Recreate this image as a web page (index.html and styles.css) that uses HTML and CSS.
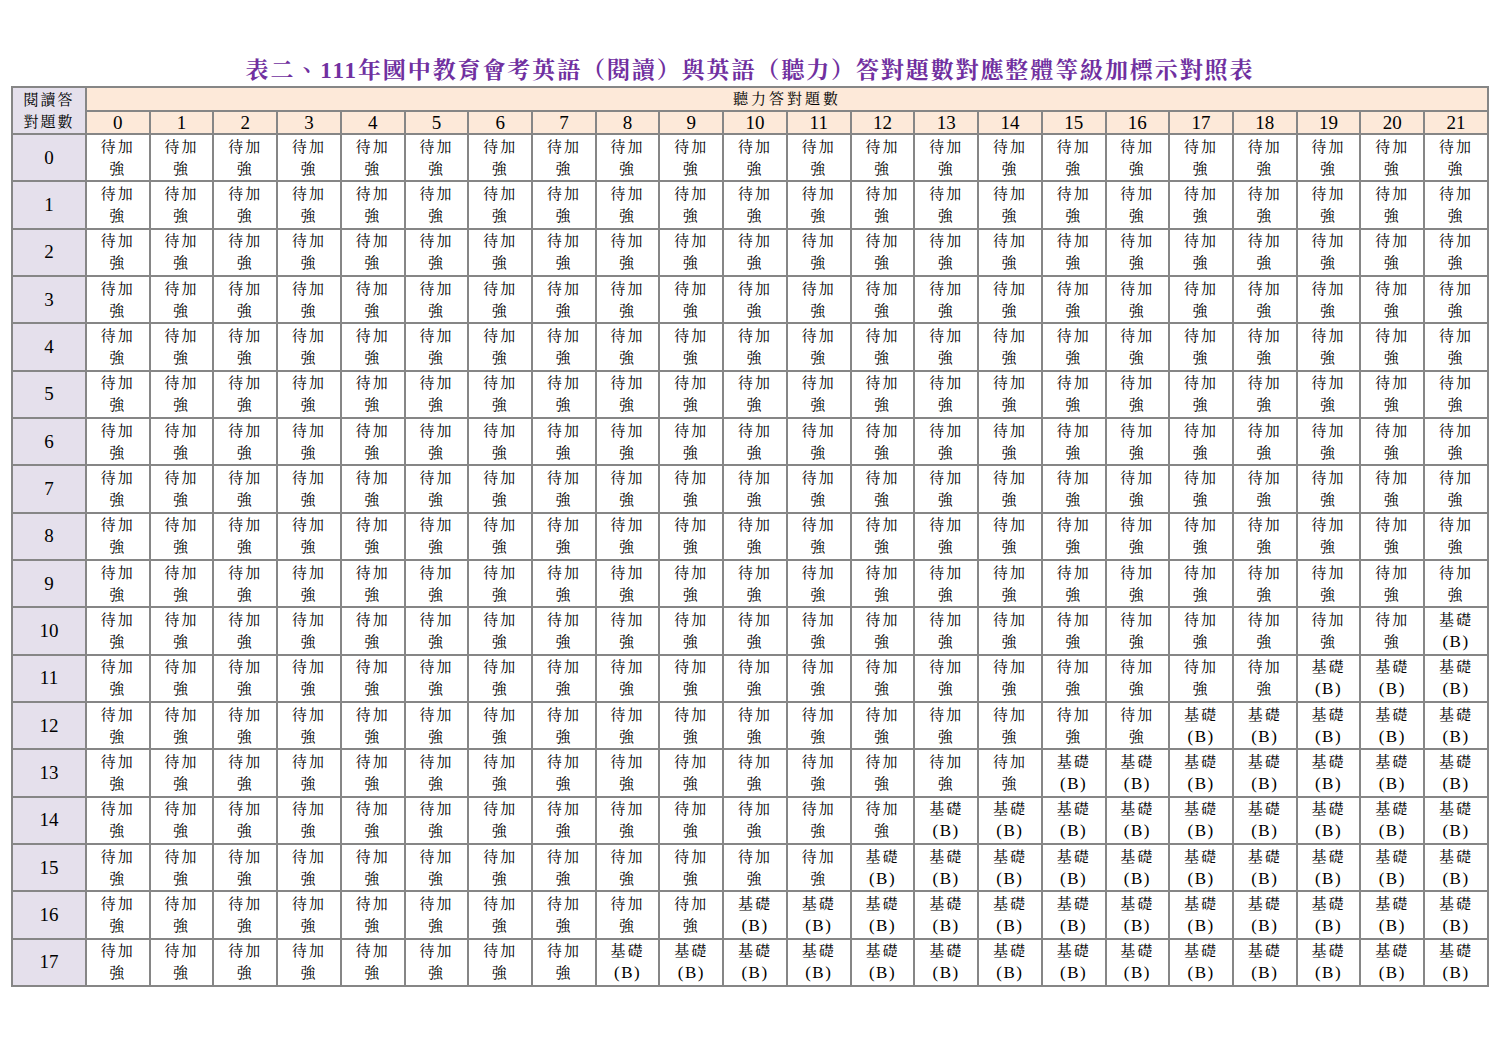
FILE: index.html
```html
<!DOCTYPE html>
<html lang="zh-Hant">
<head>
<meta charset="utf-8">
<title>表二</title>
<link rel="stylesheet" href="styles.css">
</head>
<body>
<div class="page">
<h1 class="title">表二、111年國中教育會考英語（閱讀）與英語（聽力）答對題數對應整體等級加標示對照表</h1>
<table class="grid">
<colgroup><col class="c-label"><col span="22"></colgroup>
<thead>
<tr class="h1"><th rowspan="2" class="corner">閱讀答<br>對題數</th><th colspan="22" class="head">聽力答對題數</th></tr>
<tr class="h2"><th class="num">0</th><th class="num">1</th><th class="num">2</th><th class="num">3</th><th class="num">4</th><th class="num">5</th><th class="num">6</th><th class="num">7</th><th class="num">8</th><th class="num">9</th><th class="num">10</th><th class="num">11</th><th class="num">12</th><th class="num">13</th><th class="num">14</th><th class="num">15</th><th class="num">16</th><th class="num">17</th><th class="num">18</th><th class="num">19</th><th class="num">20</th><th class="num">21</th></tr>
</thead>
<tbody id="rows"></tbody>
</table>
</div>
<script src="app.js"></script>
</body>
</html>
```
FILE: app.js
```js
var firstB = {10:21, 11:19, 12:17, 13:15, 14:13, 15:12, 16:10, 17:8};
var tbody = document.getElementById('rows');
var html = '';
for (var r = 0; r < 18; r++) {
  html += '<tr class="row"><th class="label">' + r + '</th>';
  var fb = firstB[r] === undefined ? 99 : firstB[r];
  for (var c = 0; c < 22; c++) {
    if (c >= fb) html += '<td class="cell">基礎<br><span class="b">(B)</span></td>';
    else html += '<td class="cell">待加<br>強</td>';
  }
  html += '</tr>';
}
tbody.innerHTML = html;
```
FILE: styles.css
```css
body {
  margin: 0;
  background: #fff;
  color: #000;
  font-family: "Liberation Serif", "Noto Serif CJK TC", "Noto Sans CJK TC", serif;
}
.page {
  padding: 56px 0 0 11px;
}
.title {
  margin: 0;
  width: 1478px;
  height: 30px;
  line-height: 30px;
  text-align: center;
  color: #7030a0;
  font-size: 23px;
  font-weight: bold;
  letter-spacing: 1.9px;
  font-family: "Liberation Serif", "Noto Serif CJK TC", "Noto Sans CJK TC", serif;
}
.grid {
  border-collapse: collapse;
  table-layout: fixed;
  width: 1478px;
}
.c-label {
  width: 74px;
}
.grid th, .grid td {
  border: 2px solid #868686;
  padding: 0;
  text-align: center;
  font-weight: normal;
  overflow: hidden;
}
.corner {
  background: #e5e0ec;
  font-size: 15px;
  line-height: 22px;
  letter-spacing: 2px;
}
.head {
  background: #fde9d9;
  font-size: 15px;
  line-height: 20px;
  letter-spacing: 3px;
}
.h1 { height: 24px; }
.h2 { height: 23px; }
.num {
  background: #fde9d9;
  font-size: 19px;
  line-height: 19px;
}
.row { height: 47.33px; }
.label {
  background: #e5e0ec;
  font-size: 19px;
}
.cell {
  font-size: 15px;
  line-height: 22px;
  letter-spacing: 2px;
}
.b {
  letter-spacing: 1.5px;
  font-size: 17px;
  line-height: 1;
}
```
